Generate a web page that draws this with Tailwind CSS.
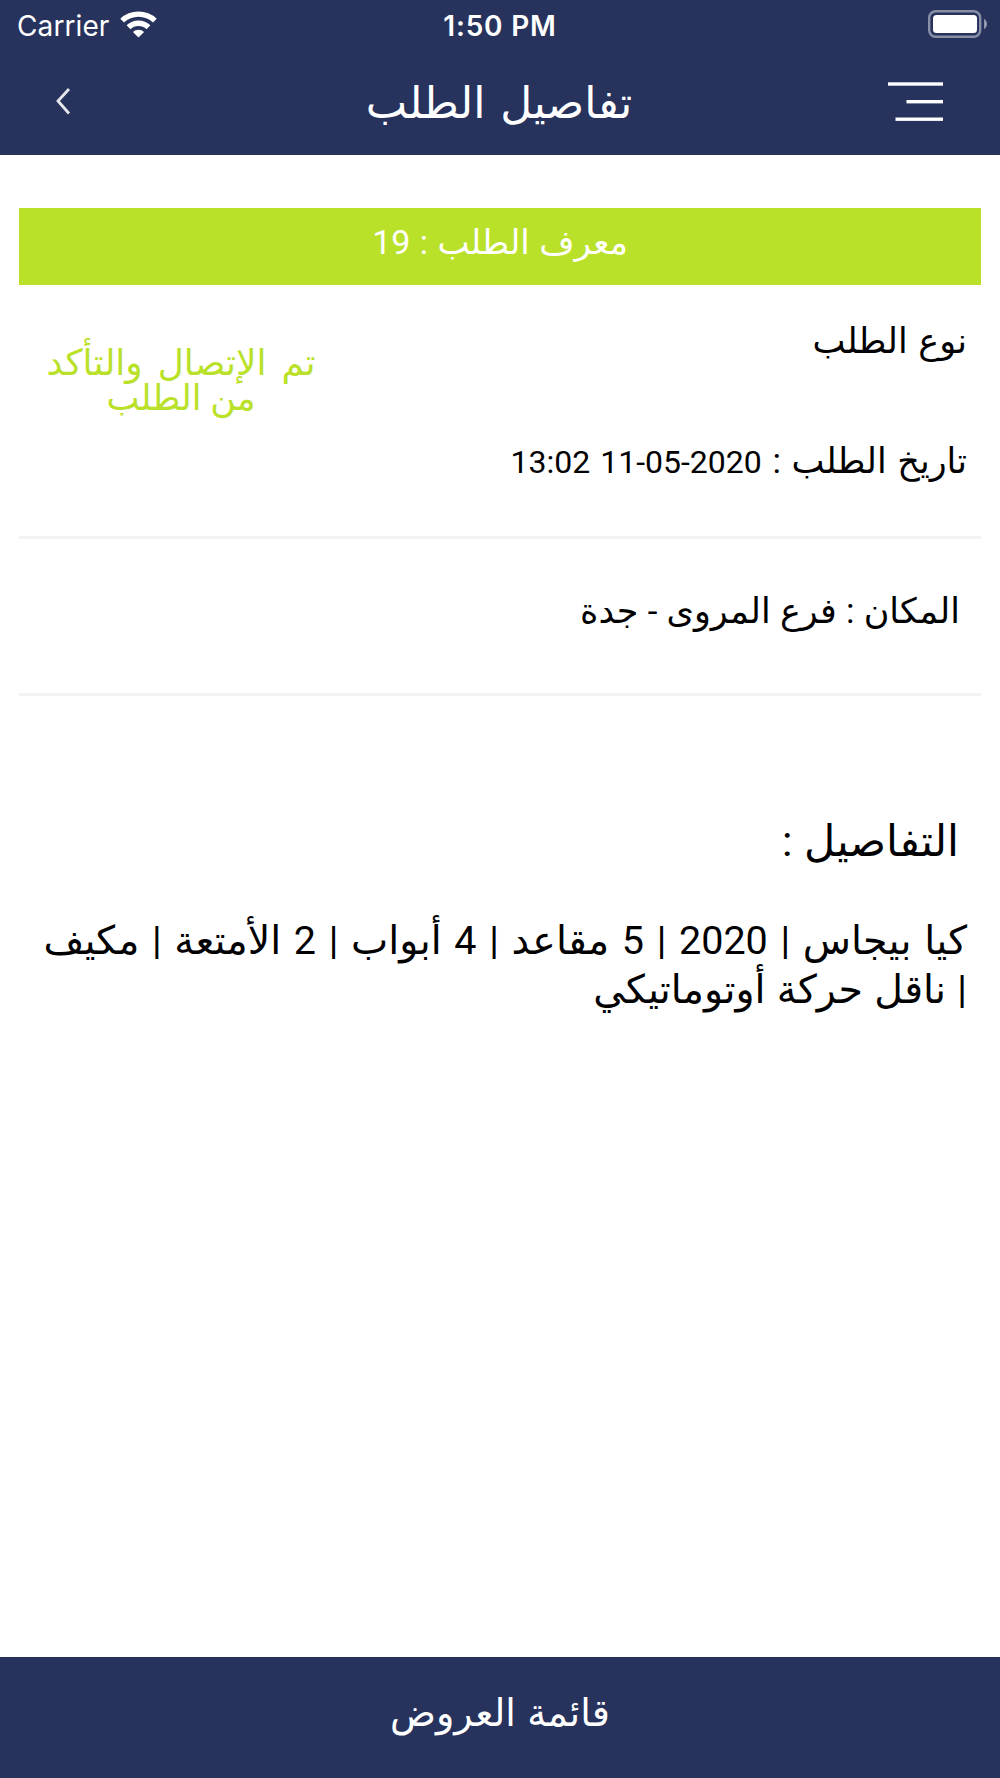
<!DOCTYPE html>
<html lang="ar" dir="rtl">
<head>
    <meta charset="UTF-8" />
    <meta name="viewport" content="width=device-width, initial-scale=1" />
    <script src="https://cdn.jsdelivr.net/npm/@tailwindcss/browser@4"></script>
    <title>تفاصيل الطلب</title>
</head>
<body class="bg-white text-black h-[1778px] flex flex-col overflow-hidden font-['Roboto','DejaVu_Sans',sans-serif]">
    <header class="bg-[#27335d] text-white h-[155px] shrink-0">
        <!-- Status bar -->
        <div dir="ltr" class="h-[50px] grid grid-cols-3 items-center px-[16px] font-['Inter',sans-serif] text-[28px] leading-[50px]">
            <div class="flex items-center gap-[11px]">
                <span class="pl-[1px] pt-[1px] tracking-[0.1px]">Carrier</span>
                <svg class="w-[37px] h-[28px] -mt-[4px]" viewBox="0 0 37 28">
                    <path d="M0.3 8.7a26.5 26.5 0 0 1 36.4 0l-3.7 3.9a21 21 0 0 0-29 0z" fill="#fff" />
                    <path d="M6.6 15.3a17.3 17.3 0 0 1 23.8 0l-3.9 4a11.6 11.6 0 0 0-16 0z" fill="#fff" />
                    <path d="M18.5 27.5l-5.6-5.5a8.2 8.2 0 0 1 11.2 0z" fill="#fff" />
                </svg>
            </div>
            <span class="pt-[1px] text-center font-semibold tracking-[0.8px]">1:50 PM</span>
            <svg class="w-[60px] h-[28px] justify-self-end -mt-[3px] -mr-[4px]" viewBox="0 0 60 28">
                <rect x="1.2" y="1.2" width="51" height="25.6" rx="6.5" fill="none" stroke="#fff" stroke-opacity=".45" stroke-width="2.4" />
                <rect x="5" y="5" width="44" height="18" rx="3.5" fill="#fff" />
                <path d="M56 9c4 1.5 4 8.5 0 10z" fill="#fff" fill-opacity=".5" />
            </svg>
        </div>
        <!-- Navigation -->
        <nav class="h-[98px] flex items-center justify-between pr-[57px] pl-[55px]">
            <svg class="w-[56px] h-[40px] mt-[6px]" viewBox="0 0 56 40" fill="#fff">
                <rect x="1" y="0.3" width="55" height="3.4" />
                <rect x="19.5" y="18" width="36.5" height="3.4" />
                <rect x="8.5" y="35.5" width="47.5" height="3.4" />
            </svg>
            <h1 class="pt-[8px] text-[44px] leading-[60px] [word-spacing:4px]">تفاصيل الطلب</h1>
            <svg class="w-[56px] h-[30px] mt-[4px]" viewBox="0 0 56 30" fill="none">
                <path d="M14 3L3 15 14 27.5" stroke="#e4e6ec" stroke-width="2.8" />
            </svg>
        </nav>
    </header>

    <main class="flex-grow px-[19px] pt-[53px]">
        <div class="h-[77px] bg-[#b9e129] text-white text-center text-[34px] leading-[68px] [word-spacing:1px]">معرف الطلب : 19</div>

        <section class="h-[254px] flex justify-between border-b-[3px] border-[#f2f2f5] pr-[14px] pl-[26px]">
            <div>
                <p class="mt-[32px] text-[35px] leading-[50px] [word-spacing:2px]">نوع الطلب</p>
                <p class="mt-[70px] text-[35px] leading-[50px] [word-spacing:2px]">تاريخ الطلب : <span class="text-[32px]">2020-05-11 13:02</span></p>
            </div>
            <div class="mt-[60px] w-[272px] text-center text-[36px] leading-[36px] text-[#b9e129] whitespace-nowrap">
                <p class="[word-spacing:6px]">تم الإتصال والتأكد</p>
                <p class="text-[35px]">من الطلب</p>
            </div>
        </section>

        <section class="h-[157px] border-b-[3px] border-[#f2f2f5] pr-[21px] pt-[48px]">
            <p class="text-[35px] leading-[50px] [word-spacing:0.5px]">المكان : فرع المروى - جدة</p>
        </section>

        <section class="pr-[14px] pt-[115px]">
            <h2 class="pr-[8px] text-[43px] leading-[60px] [word-spacing:1px]">التفاصيل :</h2>
            <div class="mt-[45px] text-[39.5px] leading-[49px] whitespace-nowrap">
                <p class="[word-spacing:2.9px]">كيا بيجاس | 2020 | 5 مقاعد | 4 أبواب | 2 الأمتعة | مكيف</p>
                <p class="[word-spacing:1.5px]">| ناقل حركة أوتوماتيكي</p>
            </div>
        </section>
    </main>

    <footer class="h-[121px] shrink-0 bg-[#27335d]">
        <button class="w-full h-full pb-[10px] text-white text-center text-[38px] leading-[60px] [word-spacing:2px]">قائمة العروض</button>
    </footer>
</body>
</html>
